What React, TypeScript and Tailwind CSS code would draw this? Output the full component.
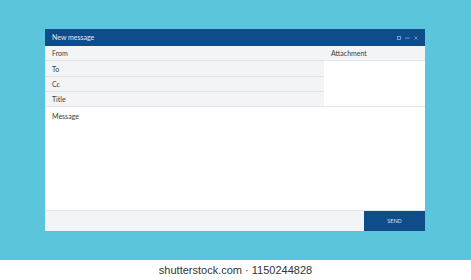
import React from "react";

export default function App() {
  const font = { fontFamily: "Lato, 'Open Sans', sans-serif" };
  return (
    <div className="w-[471px] h-[280px] flex flex-col bg-white" style={font}>
      <div className="h-[260px] bg-[#5bc5db] pt-[29px] pl-[45px]">
        <div className="w-[380px] h-[202px] flex flex-col bg-white">
          <div className="h-[17px] bg-[#0f4c8a] flex items-center justify-between pl-[7px] pr-[7px]">
            <span className="text-[7px] text-[#e3ebf5] leading-none">New message</span>
            <div className="flex items-center gap-[4px] text-[#8fb0d4]">
              <svg width="4" height="4" viewBox="0 0 4 4"><rect x="0.5" y="0.5" width="3" height="3" fill="none" stroke="currentColor" strokeWidth="0.8" /></svg>
              <svg width="5" height="4" viewBox="0 0 5 4"><line x1="0" y1="2" x2="5" y2="2" stroke="currentColor" strokeWidth="0.7" /></svg>
              <svg width="4" height="4" viewBox="0 0 4 4"><path d="M0.5 0.5L3.5 3.5M3.5 0.5L0.5 3.5" stroke="currentColor" strokeWidth="0.7" /></svg>
            </div>
          </div>
          <div className="flex h-[61px] border-b border-[#e3e4e7]">
            <div className="w-[279px] flex flex-col bg-[#f3f4f6]">
              {["From", "To", "Cc", "Title"].map((t, i) => (
                <div
                  key={t}
                  className={`flex-1 flex items-center pl-[7px] pt-[1px] text-[7px] text-[#3a3a3a] ${i < 3 ? "border-b border-[#e1e2e5]" : ""}`}
                >
                  {t}
                </div>
              ))}
            </div>
            <div className="flex-1 flex flex-col">
              <div className="h-[15px] bg-[#f3f4f6] flex items-center pl-[7px] pt-[1px] text-[7px] text-[#3a3a3a] border-b border-[#e8e9ec]">
                Attachment
              </div>
              <div className="flex-1 bg-white" />
            </div>
          </div>
          <div className="flex-1 bg-white pl-[7px] pt-[6px] text-[7px] text-[#3a3a3a] leading-none">Message</div>
          <div className="h-[21px] flex border-t border-[#e3e4e7]">
            <div className="w-[319px] bg-[#f3f4f6]" />
            <div className="flex-1 bg-[#0f4c8a] flex items-center justify-center text-[5.5px] text-[#d6e2f0]">SEND</div>
          </div>
        </div>
      </div>
      <div className="flex-1 flex items-center justify-center text-[11px] text-[#333]" style={{ fontFamily: "'Liberation Sans', Arial, sans-serif" }}>
        shutterstock.com · 1150244828
      </div>
    </div>
  );
}
